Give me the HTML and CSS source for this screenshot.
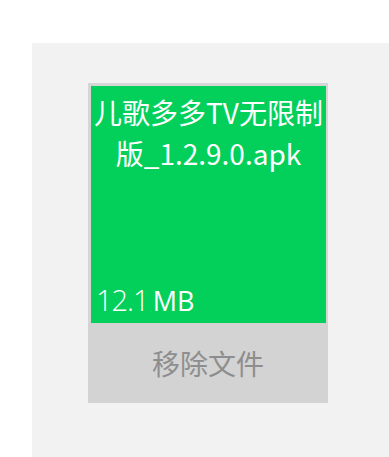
FILE: index.html
```html
<!DOCTYPE html>
<html lang="zh-CN">
<head>
<meta charset="utf-8">
<title>文件</title>
<link rel="stylesheet" href="styles.css">
</head>
<body>
<div class="panel">
  <div class="card">
    <div class="tile">
      <div class="name">儿歌多多TV无限制版_1.2.9.0.apk</div>
      <div class="size"><span class="num">12.1</span> <span class="unit">MB</span></div>
    </div>
    <div class="remove">移除文件</div>
  </div>
</div>
</body>
</html>
```

FILE: styles.css
```css
html, body {
  margin: 0;
  padding: 0;
  background: #ffffff;
}
body {
  font-family: "Open Sans", "Noto Sans CJK SC", sans-serif;
}
.panel {
  margin: 43px 0 0 32px;
  height: 414px;
  background: #f2f2f2;
  padding: 40px 0 0 56px;
  box-sizing: border-box;
}
.card {
  width: 240px;
  display: flex;
  flex-direction: column;
}
.tile {
  border-top: 3px solid #d6d6d6;
  border-left: 3px solid #d6d6d6;
  border-right: 2px solid #d6d6d6;
  background: #03d05a;
  height: 237px;
  display: flex;
  flex-direction: column;
  justify-content: space-between;
  color: #ffffff;
}
.name {
  font-family: "Noto Sans CJK SC", sans-serif;
  font-size: 28px;
  line-height: 41px;
  text-align: center;
  padding-top: 6px;
}
.size {
  padding: 0 0 0 5px;
  line-height: 36px;
  white-space: nowrap;
}
.num {
  font-family: "Open Sans", sans-serif;
  font-weight: 300;
  font-size: 29px;
  letter-spacing: -1px;
}
.unit {
  font-family: "Open Sans", sans-serif;
  font-weight: 500;
  font-size: 27px;
}
.remove {
  height: 80px;
  background: #d3d3d3;
  color: #8e8e8e;
  font-family: "Noto Sans CJK SC", sans-serif;
  font-size: 28px;
  display: flex;
  align-items: center;
  justify-content: center;
}
```
